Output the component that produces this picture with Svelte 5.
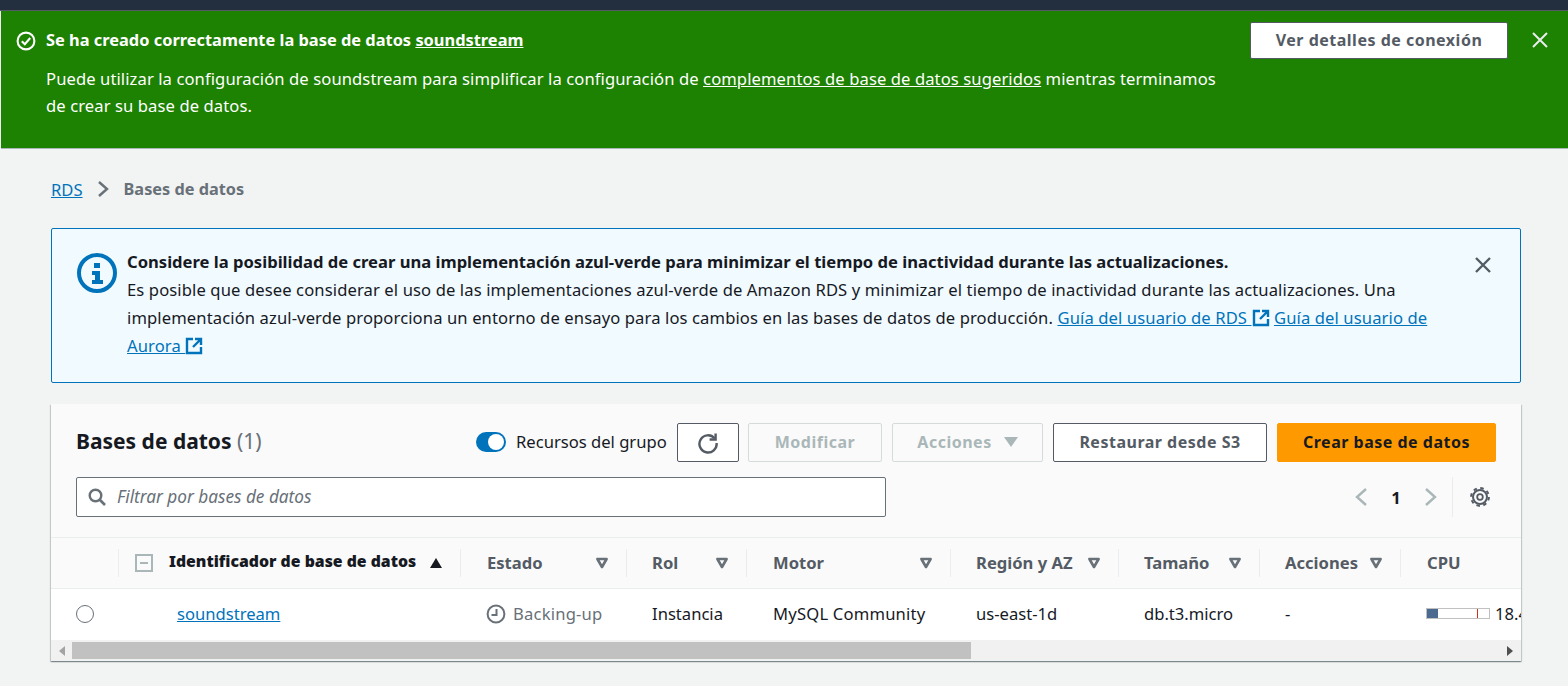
<script>
  const columns = [
    { label: 'Estado', filter: true },
    { label: 'Rol', filter: true },
    { label: 'Motor', filter: true },
    { label: 'Región y AZ', filter: true },
    { label: 'Tamaño', filter: true },
    { label: 'Acciones', filter: true },
    { label: 'CPU', filter: false }
  ];
</script>

{#snippet ext()}
  <svg class="ext" viewBox="0 0 18 18" width="18" height="18" aria-hidden="true">
    <path d="M8 2H2v14h14v-6" fill="none" stroke="currentColor" stroke-width="2.4"/>
    <path d="M10 2h6v6M16 2L8 10" fill="none" stroke="currentColor" stroke-width="2.4"/>
  </svg>
{/snippet}

{#snippet tri()}
  <svg class="tri" viewBox="0 0 14 12" width="14" height="12" aria-hidden="true">
    <path d="M2.4 2h9.2L7 10z" fill="none" stroke="#687078" stroke-width="2.6" stroke-linejoin="round"/>
  </svg>
{/snippet}

<div class="page">
  <div class="topbar"></div>

  <section class="flash">
    <div class="flash-main">
      <div class="flash-title">
        <svg viewBox="0 0 20 20" width="20" height="20" aria-hidden="true">
          <circle cx="10" cy="10" r="8.4" fill="none" stroke="#fff" stroke-width="2.1"/>
          <path d="M5.8 10.2l3 3 5.4-6.2" fill="none" stroke="#fff" stroke-width="2.1"/>
        </svg>
        <strong>Se ha creado correctamente la base de datos <a href="#a">soundstream</a></strong>
      </div>
      <p>Puede utilizar la configuración de soundstream para simplificar la configuración de <a href="#a">complementos de base de datos sugeridos</a> mientras terminamos de crear su base de datos.</p>
    </div>
    <button class="btn details">Ver detalles de conexión</button>
    <svg class="flash-x" viewBox="0 0 16 16" width="16" height="16" aria-hidden="true">
      <path d="M1 1l14 14M15 1L1 15" stroke="#eaeded" stroke-width="2" fill="none"/>
    </svg>
  </section>

  <nav class="crumbs">
    <a href="#a">RDS</a>
    <svg viewBox="0 0 12 18" width="12" height="18" aria-hidden="true"><path d="M2 2l8 7-8 7" fill="none" stroke="#687078" stroke-width="2.4"/></svg>
    <span>Bases de datos</span>
  </nav>

  <section class="info">
    <svg class="info-icon" viewBox="0 0 40 40" width="40" height="40" aria-hidden="true">
      <circle cx="20" cy="20" r="18" fill="none" stroke="#0073bb" stroke-width="4"/>
      <rect x="17" y="10" width="6" height="5" fill="#0073bb"/>
      <path d="M15 18h8v9h3v4H15v-4h3v-5h-3z" fill="#0073bb"/>
    </svg>
    <div class="info-text">
      <strong>Considere la posibilidad de crear una implementación azul-verde para minimizar el tiempo de inactividad durante las actualizaciones.</strong>
      <p>Es posible que desee considerar el uso de las implementaciones azul-verde de Amazon RDS y minimizar el tiempo de inactividad durante las actualizaciones. Una implementación azul-verde proporciona un entorno de ensayo para los cambios en las bases de datos de producción. <a href="#a">Guía del usuario de RDS {@render ext()}</a> <a href="#a">Guía del usuario de Aurora {@render ext()}</a></p>
    </div>
    <svg class="info-x" viewBox="0 0 18 18" width="18" height="18" aria-hidden="true">
      <path d="M2 2l14 14M16 2L2 16" stroke="#545b64" stroke-width="2.4" fill="none"/>
    </svg>
  </section>

  <section class="card">
    <header class="card-head">
      <div class="row-one">
        <h1>Bases de datos <span>(1)</span></h1>
        <div class="toggle"><i></i></div>
        <span class="toggle-label">Recursos del grupo</span>
        <button class="btn refresh" aria-label="Actualizar">
          <svg viewBox="0 0 22 22" width="22" height="22" aria-hidden="true">
            <path d="M17.5 6.2A8.6 8.6 0 1 0 19.6 11" fill="none" stroke="#545b64" stroke-width="2.4"/>
            <path d="M18.6 1.5v6h-6" fill="none" stroke="#545b64" stroke-width="2.4"/>
          </svg>
        </button>
        <button class="btn off modify">Modificar</button>
        <button class="btn off actions">Acciones <svg viewBox="0 0 14 10" width="14" height="10" aria-hidden="true"><path d="M0 0h14L7 10z" fill="#aab7b8"/></svg></button>
        <button class="btn restore">Restaurar desde S3</button>
        <button class="btn primary">Crear base de datos</button>
      </div>
      <div class="row-two">
        <label class="filter">
          <svg viewBox="0 0 18 18" width="18" height="18" aria-hidden="true">
            <circle cx="7.5" cy="7.5" r="5.8" fill="none" stroke="#687078" stroke-width="2.4"/>
            <path d="M12 12l5 5" stroke="#687078" stroke-width="2.6"/>
          </svg>
          <em>Filtrar por bases de datos</em>
        </label>
        <div class="pager">
          <svg viewBox="0 0 14 20" width="14" height="20" aria-hidden="true"><path d="M12 2L3 10l9 8" fill="none" stroke="#aab7b8" stroke-width="2.4"/></svg>
          <b>1</b>
          <svg viewBox="0 0 14 20" width="14" height="20" aria-hidden="true"><path d="M2 2l9 8-9 8" fill="none" stroke="#aab7b8" stroke-width="2.4"/></svg>
          <span class="pager-sep"></span>
          <svg viewBox="0 0 20 20" width="20" height="20" aria-hidden="true">
            <circle cx="10" cy="10" r="2.8" fill="none" stroke="#545b64" stroke-width="1.8"/>
            <circle cx="10" cy="10" r="7" fill="none" stroke="#545b64" stroke-width="2"/>
            <circle cx="10" cy="10" r="8.9" fill="none" stroke="#545b64" stroke-width="2" stroke-dasharray="3.5 3.49"/>
          </svg>
        </div>
      </div>
    </header>

    <div class="table">
      <div class="th blank"></div>
      <div class="th ident">
        <span class="check"><i></i></span>
        <strong>Identificador de base de datos</strong>
        <svg viewBox="0 0 14 10" width="14" height="10" aria-hidden="true"><path d="M7 0l6 10H1z" fill="#16191f"/></svg>
      </div>
      {#each columns as c}
        <div class="th"><span class="th-label">{c.label}</span>{#if c.filter}{@render tri()}{/if}</div>
      {/each}

      <div class="td radio"><span></span></div>
      <div class="td name"><a href="#a">soundstream</a></div>
      <div class="td status">
        <svg viewBox="0 0 20 20" width="20" height="20" aria-hidden="true">
          <circle cx="10" cy="10" r="8.4" fill="none" stroke="#687078" stroke-width="2"/>
          <path d="M10.5 5v6H5.5" fill="none" stroke="#687078" stroke-width="2"/>
        </svg>
        <span class="status-text">Backing-up</span>
      </div>
      <div class="td">Instancia</div>
      <div class="td wide">MySQL Community</div>
      <div class="td">us-east-1d</div>
      <div class="td">db.t3.micro</div>
      <div class="td">-</div>
      <div class="td cpu"><span class="meter"><i></i><u></u></span><span>18.4%</span></div>
    </div>

    <div class="scrollbar">
      <svg class="arrow" viewBox="0 0 6 10" width="6" height="10" aria-hidden="true"><path d="M6 0v10L0 5z" fill="#a3a3a3"/></svg>
      <div class="thumb"></div>
      <svg class="arrow right" viewBox="0 0 6 10" width="6" height="10" aria-hidden="true"><path d="M0 0v10l6-5z" fill="#505050"/></svg>
    </div>
  </section>
</div>

<style>
  :global(body) { margin: 0; background: #f2f3f3; }
  .page { width: 1568px; height: 686px; overflow: hidden; font-family: "Noto Sans", "Open Sans", sans-serif; font-size: 16.6px; color: #16191f; background: #f2f3f3; }
  a { color: #0073bb; text-decoration: underline; }
  button { font-family: inherit; }
  .topbar { height: 10px; background: #232f3e; border-bottom: 1px solid #545b64; }

  .flash { height: 138px; box-sizing: border-box; margin-left: 1px; background: #1d8102; border-bottom: 1px solid #aab7b8; color: #fff; display: flex; align-items: flex-start; padding: 11px 20px 0 15px; }
  .flash a { color: #fff; }
  .flash-main { width: 1234px; }
  .flash-title { display: flex; align-items: center; gap: 10px; height: 37px; }
  .flash-title strong { font-weight: 700; font-size: 16.4px; position: relative; top: -1px; }
  .flash p { margin: 6px 0 0 30px; line-height: 27px; width: 1180px; letter-spacing: .09px; }
  .btn { box-sizing: border-box; height: 39px; border-radius: 2px; font-size: 16px; font-weight: 700; letter-spacing: .5px; background: #fff; color: #545b64; border: 1px solid #545b64; padding: 0 0 2px; display: flex; align-items: center; justify-content: center; flex: none; }
  .details { width: 258px; height: 37px; }
  .flash-x { margin: 10px 0 0 24px; flex: none; }

  .crumbs { display: flex; align-items: center; height: 24px; margin: 28px 0 0 51px; }
  .crumbs svg { margin: 0 15px 0 14px; }
  .crumbs span { color: #687078; font-weight: 700; font-size: 16.3px; }

  .info { box-sizing: border-box; width: 1470px; height: 155px; margin: 27px 0 0 51px; background: #f1faff; border: 1px solid #0073bb; border-radius: 2px; display: flex; align-items: flex-start; padding: 24px 28px 0 25px; }
  .info-icon { flex: none; margin-right: 10px; }
  .info-text { width: 1310px; line-height: 28px; margin-top: -5px; }
  .info-text p { margin: 0; letter-spacing: .11px; }
  .ext { vertical-align: -3px; color: #0073bb; }
  .info-x { margin: 3px 0 0 auto; flex: none; }

  .card { width: 1470px; height: 257px; margin: 21px 0 0 51px; background: #fff; box-shadow: 0 1px 1px 0 rgba(0,28,36,.3), 1px 1px 1px 0 rgba(0,28,36,.15), -1px 1px 1px 0 rgba(0,28,36,.15); }
  .card-head { box-sizing: border-box; height: 134px; background: #fafafa; border-bottom: 1px solid #eaeded; padding: 19px 25px 0; }
  .row-one { display: flex; align-items: center; height: 39px; }
  h1 { margin: 0 0 4px; font-size: 21px; font-weight: 700; line-height: 34px; width: 400px; flex: none; }
  h1 span { font-weight: 400; color: #687078; }
  .toggle { width: 30px; height: 20px; border-radius: 10px; background: #0073bb; position: relative; flex: none; margin-bottom: 1px; }
  .toggle i { position: absolute; right: 2px; top: 2px; width: 16px; height: 16px; border-radius: 50%; background: #fff; }
  .toggle-label { margin: 0 0 2px 10px; width: 161px; flex: none; }
  .refresh { width: 62px; padding: 0; }
  .off { background: transparent; border-color: #d5dbdb; color: #aab7b8; }
  .modify { width: 134px; margin-left: 9px; }
  .actions { width: 151px; margin-left: 10px; gap: 12px; }
  .restore { width: 214px; margin-left: 10px; }
  .primary { width: 219px; margin-left: 10px; background: #f90; border-color: #f90; color: #16191f; }

  .row-two { display: flex; align-items: flex-start; margin-top: 15px; }
  .filter { box-sizing: border-box; width: 810px; height: 40px; background: #fff; border: 1px solid #687078; border-radius: 2px; display: flex; align-items: center; gap: 11px; padding-left: 11px; }
  .filter em { color: #687078; font-style: italic; font-size: 17.2px; position: relative; top: -1px; }
  .pager { display: flex; align-items: center; height: 40px; margin-left: 468px; }
  .pager b { width: 56px; text-align: center; font-weight: 700; }
  .pager-sep { width: 1px; height: 40px; background: #eaeded; margin: 0 17px 0 14px; }

  .table { display: grid; grid-template-columns: 67px 342px 166px 120px 204px 168px 141px 141px 121px; grid-template-rows: 51px 51px; overflow: hidden; }
  .th { box-sizing: border-box; background: #fafafa; border-bottom: 1px solid #eaeded; display: flex; align-items: center; padding: 0 17px 0 26px; color: #545b64; font-weight: 700; position: relative; }
  .th::after { content: ""; position: absolute; right: -1px; top: 11px; height: 28px; width: 1px; background: #eaeded; z-index: 1; }
  .th:nth-child(3), .th:nth-child(5), .th:nth-child(9) { padding-left: 27px; }
  .th:nth-child(9)::after { display: none; }
  .th-label { flex: 1; white-space: nowrap; margin-bottom: 2px; }
  .ident { padding-left: 17px; color: #16191f; padding-right: 17px; }
  .ident strong { margin-left: 16px; flex: 1; position: relative; top: -2px; white-space: nowrap; font-size: 15.8px; }
  .check { box-sizing: border-box; width: 18px; height: 18px; border: 2px solid #aab7b8; display: flex; align-items: center; justify-content: center; }
  .check i { width: 8px; height: 2px; background: #aab7b8; }
  .td { box-sizing: border-box; display: flex; align-items: center; padding: 0 0 2px 26px; white-space: nowrap; background: #fff; overflow: hidden; }
  .td.wide { padding-left: 27px; letter-spacing: .2px; }
  .radio { padding: 0 0 2px 25px; }
  .radio span { box-sizing: border-box; width: 18px; height: 18px; border-radius: 50%; border: 1.5px solid #687078; background: #fff; }
  .name { padding-left: 59px; }
  .status { color: #687078; gap: 7px; padding-left: 26px; }
  .status-text { letter-spacing: .2px; }
  .cpu { gap: 5px; }
  .meter { box-sizing: border-box; width: 64px; height: 11px; border: 1px solid #c0c0c0; position: relative; flex: none; }
  .meter i { position: absolute; left: 0; top: 0; bottom: 0; width: 11px; background: #4a6b8f; }
  .meter u { position: absolute; left: 50px; top: 0; bottom: 0; width: 1px; background: #d13212; }

  .scrollbar { height: 21px; background: #f1f1f1; position: relative; display: flex; align-items: center; margin-top: 0; }
  .arrow { margin-left: 8px; flex: none; }
  .thumb { width: 899px; height: 17px; background: #c1c1c1; margin-left: 7px; flex: none; }
  .arrow.right { margin-left: auto; margin-right: 8px; }
</style>
